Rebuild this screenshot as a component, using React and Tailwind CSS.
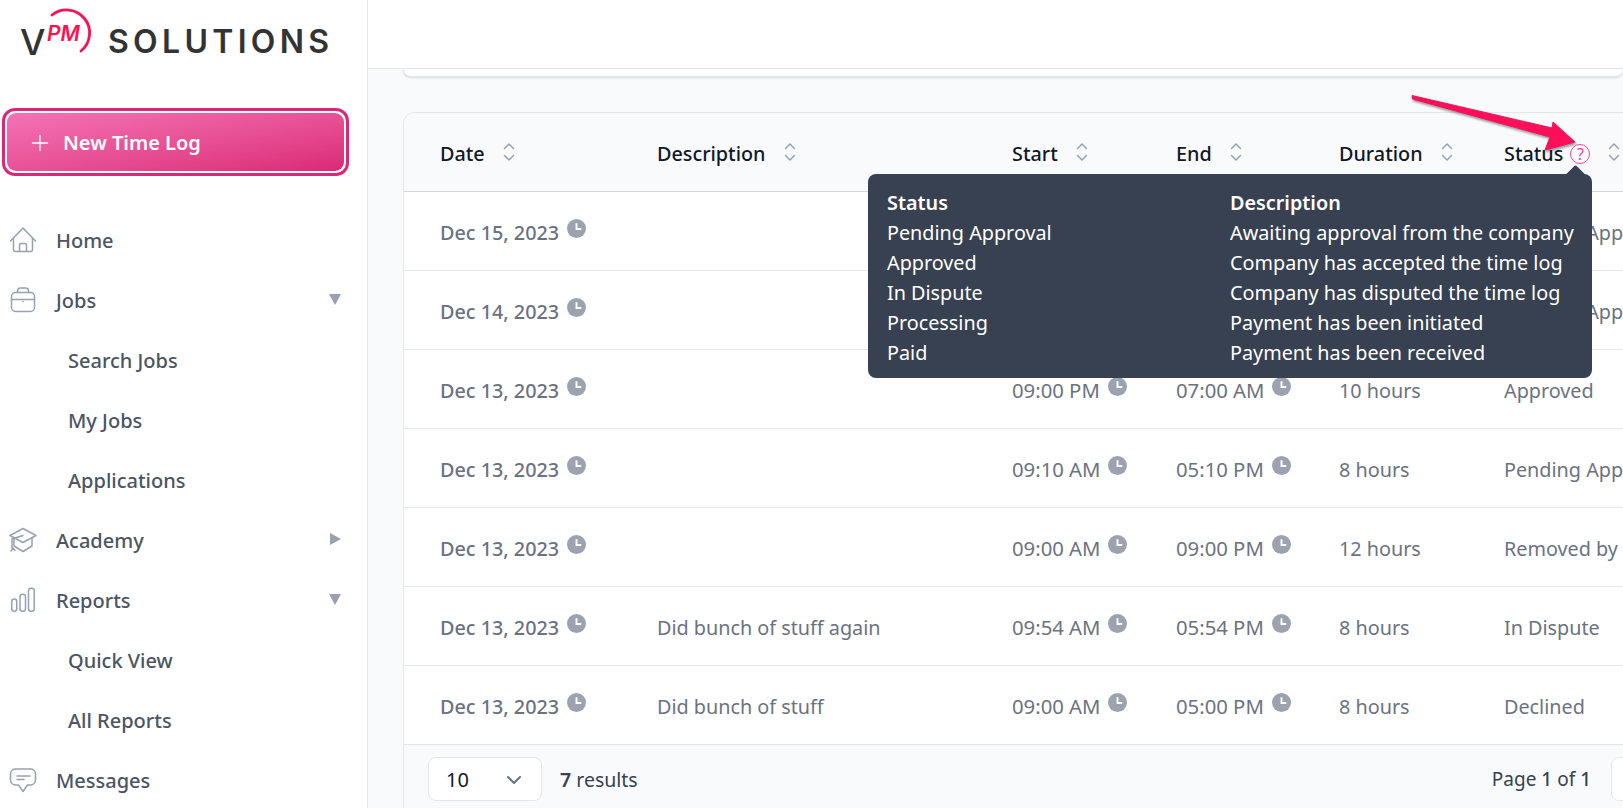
import React from "react";
import { Plus, ChevronDown } from "lucide-react";

const rows = [
  { date: "Dec 15, 2023", desc: "", start: "09:00 AM", end: "05:00 PM", duration: "8 hours", status: "Pending Approval" },
  { date: "Dec 14, 2023", desc: "", start: "09:00 AM", end: "05:00 PM", duration: "8 hours", status: "Pending Approval" },
  { date: "Dec 13, 2023", desc: "", start: "09:00 PM", end: "07:00 AM", duration: "10 hours", status: "Approved" },
  { date: "Dec 13, 2023", desc: "", start: "09:10 AM", end: "05:10 PM", duration: "8 hours", status: "Pending Approval" },
  { date: "Dec 13, 2023", desc: "", start: "09:00 AM", end: "09:00 PM", duration: "12 hours", status: "Removed by Company" },
  { date: "Dec 13, 2023", desc: "Did bunch of stuff again", start: "09:54 AM", end: "05:54 PM", duration: "8 hours", status: "In Dispute" },
  { date: "Dec 13, 2023", desc: "Did bunch of stuff", start: "09:00 AM", end: "05:00 PM", duration: "8 hours", status: "Declined" },
];

const statusHelp = [
  ["Pending Approval", "Awaiting approval from the company"],
  ["Approved", "Company has accepted the time log"],
  ["In Dispute", "Company has disputed the time log"],
  ["Processing", "Payment has been initiated"],
  ["Paid", "Payment has been received"],
];

const HomeIcon = () => (
  <svg viewBox="0 0 28 28" className="h-7 w-7" fill="none" stroke="currentColor" strokeWidth="1.5" strokeLinecap="round" strokeLinejoin="round">
    <path d="M1.500 14 14 1l12.500 13" />
    <path d="M4.500 11v11.500a2 2 0 0 0 2 2h15a2 2 0 0 0 2-2V11" />
    <path d="M10.500 24.500v-6.500a1.500 1.500 0 0 1 1.500-1.500h4a1.500 1.500 0 0 1 1.500 1.500v6.500" />
  </svg>
);

const BriefcaseIcon = () => (
  <svg viewBox="0 0 28 28" className="h-7 w-7" fill="none" stroke="currentColor" strokeWidth="1.5" strokeLinecap="round" strokeLinejoin="round">
    <rect x="2.500" y="5.500" width="23" height="19" rx="4" />
    <path d="M8.500 5.500V4a3 3 0 0 1 3-3h5a3 3 0 0 1 3 3v1.500" />
    <path d="M2.500 12.500h23" />
    <path d="M14 14.500v.2" />
  </svg>
);

const CapIcon = () => (
  <svg viewBox="0 0 28 28" className="h-7 w-7" fill="none" stroke="currentColor" strokeWidth="1.5" strokeLinecap="round" strokeLinejoin="round">
    <path d="M14 1.500 1 8.500l13 7 13-7z" />
    <path d="M5 11v8l9 5.500 9-5.500v-8" />
    <path d="M14 8.500 3 12v9" />
    <path d="M2 24l2-3 2 2.500" />
  </svg>
);

const BarsIcon = () => (
  <svg viewBox="0 0 28 28" className="h-7 w-7" fill="none" stroke="currentColor" strokeWidth="1.5">
    <rect x="2.750" y="12" width="5" height="12.250" rx="2.500" />
    <rect x="11" y="7.250" width="5.500" height="17" rx="2.500" />
    <rect x="19.500" y="1.250" width="5.750" height="23" rx="2.500" />
  </svg>
);

const MessageIcon = () => (
  <svg viewBox="0 0 28 28" className="h-7 w-7" fill="none" stroke="currentColor" strokeWidth="1.5" strokeLinecap="round" strokeLinejoin="round">
    <path d="M6 2h16a5 5 0 0 1 4.500 5v6a5 5 0 0 1-4.500 5h-3.500L14 24.500 9.500 18H6a5 5 0 0 1-4.500-5V7A5 5 0 0 1 6 2z" />
    <path d="M8 9h13M8 12.500h7" />
  </svg>
);

const Clock = () => (
  <svg viewBox="0 0 20 20" className="relative -top-1 ml-2 inline-block h-[19px] w-[19px] shrink-0">
    <circle cx="10" cy="10" r="10" fill="#9ca3af" />
    <path d="M10 4.500v6h5" fill="none" stroke="#fff" strokeWidth="2" />
  </svg>
);

const SortIcon = () => (
  <svg viewBox="0 0 12 20" className="relative -top-[2px] ml-[18px] h-5 w-3 text-gray-400" fill="none" stroke="currentColor" strokeWidth="1.500" strokeLinecap="round" strokeLinejoin="round">
    <path d="M1.500 6.500 6 2l4.500 4.500M1.500 13.500 6 18l4.500-4.500" />
  </svg>
);

const NavItem = ({ icon, label, caret }) => (
  <div className="flex h-[60px] items-center pl-[9px] pr-[26px] text-[#4b5563]">
    <span className="text-gray-400">{icon}</span>
    <span className="ml-[19px] text-[20px] font-medium">{label}</span>
    {caret === "down" && <span className="ml-auto -mt-1 h-0 w-0 border-x-[6px] border-t-[11px] border-x-transparent border-t-gray-400" />}
    {caret === "right" && <span className="ml-auto -mt-1 h-0 w-0 border-y-[6px] border-l-[11px] border-y-transparent border-l-gray-400" />}
  </div>
);

const SubItem = ({ label }) => (
  <div className="flex h-[60px] items-center pl-[68px] text-[20px] font-medium text-[#4b5563]">{label}</div>
);

const Logo = () => (
  <div className="relative h-[68px] w-full">
    <span className="absolute left-[20px] top-[20px] text-[36px] leading-[44px] font-medium text-[#333] font-['Inter',sans-serif]">V</span>
    <span className="absolute left-[47px] top-[22px] text-[21px] leading-[24px] font-semibold italic text-[#ff1053] font-['Inter',sans-serif]">PM</span>
    <svg viewBox="0 0 100 60" className="absolute left-0 top-0 h-[60px] w-[100px]" fill="none" stroke="#ff1053" strokeWidth="2.800" strokeLinecap="round">
      <path d="M52 15A22 22 0 1 1 81 51" />
    </svg>
    <span className="absolute left-[108px] top-[22px] text-[32px] leading-[40px] font-semibold tracking-[4.300px] text-[#333] font-['Inter',sans-serif]">SOLUTIONS</span>
  </div>
);

const Sidebar = () => (
  <aside className="h-[808px] w-[368px] shrink-0 border-r border-gray-200 bg-white">
    <Logo />
    <div className="px-[2px] pt-[40px]">
      <button className="flex h-[68px] w-[347px] items-center rounded-[13px] border-[3px] border-[#db2777] p-[2px]">
        <span className="flex h-full w-full items-center rounded-[9px] bg-gradient-to-br from-[#f472b6] to-[#db2777] pl-[20px] pt-[2px] text-[20px] font-semibold text-white">
          <Plus className="h-[26px] w-[26px]" strokeWidth={1.200} />
          <span className="ml-[10px]">New Time Log</span>
        </span>
      </button>
    </div>
    <nav className="mt-[35px]">
      <NavItem icon={<HomeIcon />} label="Home" />
      <NavItem icon={<BriefcaseIcon />} label="Jobs" caret="down" />
      <SubItem label="Search Jobs" />
      <SubItem label="My Jobs" />
      <SubItem label="Applications" />
      <NavItem icon={<CapIcon />} label="Academy" caret="right" />
      <NavItem icon={<BarsIcon />} label="Reports" caret="down" />
      <SubItem label="Quick View" />
      <SubItem label="All Reports" />
      <NavItem icon={<MessageIcon />} label="Messages" />
    </nav>
  </aside>
);

const Th = ({ children, extra, className = "" }) => (
  <th className={`h-[78px] p-0 pt-[5px] text-left text-[19.800px] font-medium text-gray-900 ${className}`}>
    <span className="flex items-center">
      {children}
      {extra}
      <SortIcon />
    </span>
  </th>
);

const TimeCell = ({ children }) => (
  <td className="p-0 pt-[4px] text-[20.300px] text-gray-500">
    <span className="flex items-center">
      {children}
      <Clock />
    </span>
  </td>
);

const TimeTable = () => (
  <div className="ml-[35px] mt-[35px] w-[1400px] overflow-hidden rounded-t-xl border-x border-t border-gray-200">
    <table className="w-full table-fixed border-collapse">
      <colgroup>
        <col className="w-[253px]" />
        <col className="w-[355px]" />
        <col className="w-[164px]" />
        <col className="w-[163px]" />
        <col className="w-[165px]" />
        <col />
      </colgroup>
      <thead className="border-b border-gray-300 bg-gray-50">
        <tr>
          <Th className="pl-9">Date</Th>
          <Th>Description</Th>
          <Th>Start</Th>
          <Th>End</Th>
          <Th>Duration</Th>
          <Th
            extra={
              <span className="ml-[7px] flex h-[20px] w-[20px] items-center justify-center rounded-full border border-[#ec4899] text-[16px] font-normal leading-none text-[#ec4899]">?</span>
            }
          >
            Status
          </Th>
        </tr>
      </thead>
      <tbody className="bg-white">
        {rows.map((row, i) => (
          <tr key={i} className="h-[79px] border-b border-gray-200">
            <td className="p-0 pl-9 pt-[4px] text-[19.800px] font-medium text-gray-500">
              <span className="flex items-center">
                {row.date}
                <Clock />
              </span>
            </td>
            <td className="p-0 pt-[4px] text-[19.800px] text-gray-500">{row.desc}</td>
            <TimeCell>{row.start}</TimeCell>
            <TimeCell>{row.end}</TimeCell>
            <td className="p-0 pt-[4px] text-[19.800px] text-gray-500">{row.duration}</td>
            <td className="overflow-hidden whitespace-nowrap p-0 pt-[4px] text-[19.800px] text-gray-500">{row.status}</td>
          </tr>
        ))}
      </tbody>
    </table>
    <div className="flex h-[64px] items-start bg-gray-50 pl-[24px] pt-[12px]">
      <div className="flex h-[44px] w-[114px] items-center justify-between rounded-lg border border-gray-200 bg-white pl-[17px] pr-[15px] pt-[2px] text-[20px] text-gray-900">
        10
        <ChevronDown className="h-[24px] w-[24px] text-gray-500" strokeWidth={2} />
      </div>
      <span className="ml-[18px] flex h-[44px] items-center pt-[2px] text-[19.500px] text-gray-700">
        <span className="font-semibold">7</span>&nbsp;results
      </span>
      <span className="ml-auto flex h-[44px] items-center pt-[2px] text-[19px] text-gray-700">
        Page&nbsp;<span className="font-medium">1</span>&nbsp;of&nbsp;<span className="font-medium">1</span>
      </span>
      <div className="ml-[20px] mr-[11px] h-[44px] w-[180px] rounded-lg border border-gray-200 bg-white" />
    </div>
  </div>
);

const StatusTooltip = () => (
  <div className="absolute left-[868px] top-[174px] h-[204px] w-[724px] rounded-lg bg-[#374151] pl-[19px] pt-[14px] text-[19.800px] leading-[30px] text-white">
    <span className="absolute right-[9px] top-[-6px] h-[15px] w-[15px] rotate-45 rounded-[2px] bg-[#374151]" />
    <div className="grid grid-cols-[343px_1fr]">
      <div className="font-semibold">Status</div>
      <div className="font-semibold">Description</div>
      {statusHelp.map(([name, text]) => (
        <React.Fragment key={name}>
          <div>{name}</div>
          <div>{text}</div>
        </React.Fragment>
      ))}
    </div>
  </div>
);

const PointerArrow = () => (
  <svg viewBox="0 0 200 80" className="absolute left-[1400px] top-[85px] h-[80px] w-[200px] drop-shadow-[1px_2px_1px_rgba(0,0,0,0.4)]">
    <path d="M12 10.500 12.500 14 150 52 145 65 175 57 153 37 152 43z" fill="#ff0f5a" stroke="#ff0f5a" strokeWidth="1" strokeLinejoin="round" />
  </svg>
);

export default function App() {
  return (
    <div className="relative flex h-[808px] w-full overflow-hidden bg-gray-50 font-['Noto_Sans',sans-serif]">
      <Sidebar />
      <main className="min-w-0 flex-1">
        <div className="h-[69px] border-b border-gray-200 bg-white" />
        <div className="ml-[35px] h-[8px] rounded-b-xl border-b border-l border-gray-200 bg-white shadow-sm" />
        <TimeTable />
      </main>
      <StatusTooltip />
      <PointerArrow />
    </div>
  );
}
